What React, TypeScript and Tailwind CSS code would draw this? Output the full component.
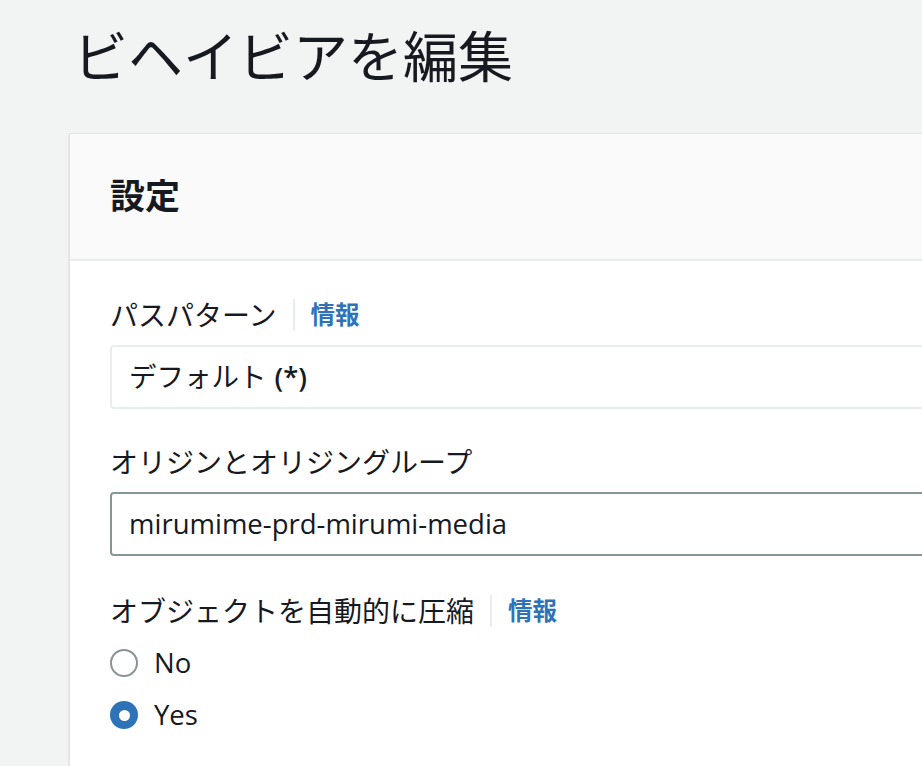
import React from 'react'

const font = { fontFamily: '"Open Sans", "Noto Sans CJK JP", sans-serif' }

function InfoLabel({ text, info }: { text: string; info?: boolean }) {
  return (
    <div className="flex h-[40px] items-center text-[28px] text-[#16191f]">
      <span>{text}</span>
      {info && (
        <>
          <span className="mx-[16px] h-[32px] w-[2px] bg-[#eaeded]" />
          <span className="text-[24.5px] font-bold text-[#2e73b8]">情報</span>
        </>
      )}
    </div>
  )
}

function Radio({ label, checked }: { label: string; checked?: boolean }) {
  return (
    <div className="flex h-[44px] items-center gap-[16px]">
      {checked ? (
        <span className="flex h-[28px] w-[28px] items-center justify-center rounded-full bg-[#2e73b8]">
          <span className="h-[11px] w-[11px] rounded-full bg-white" />
        </span>
      ) : (
        <span className="h-[28px] w-[28px] rounded-full border-[2.5px] border-[#879596] bg-white" />
      )}
      <span className="text-[27.5px] font-medium text-[#16191f]">{label}</span>
    </div>
  )
}

export default function App() {
  return (
    <div className="h-[766px] overflow-hidden bg-[#f2f3f3] pl-[69px]" style={font}>
      <h1 className="pl-[4px] pt-[16px] text-[55px] leading-[80px] font-normal text-[#16191f]">
        ビヘイビアを編集
      </h1>

      <div className="mt-[37px] w-[900px] border border-[#e1e4e4] bg-white shadow-[0_1px_1px_rgba(0,28,36,0.3)]">
        <div className="flex h-[127px] items-center border-b-2 border-[#eaeded] bg-[#fafafa] px-[40px]">
          <h2 className="text-[35px] font-bold text-[#16191f]">設定</h2>
        </div>

        <div className="px-[40px] pt-[34px] pb-[40px]">
          <InfoLabel text="パスパターン" info />
          <div className="mt-[10px] flex h-[64px] items-center rounded-[4px] border-2 border-[#eaeded] bg-white px-[17px] text-[27.5px] text-[#16191f]">
            デフォルト<span className="ml-[8px] font-semibold">(*)</span>
          </div>

          <div className="mt-[33px]">
            <InfoLabel text="オリジンとオリジングループ" />
          </div>
          <div className="mt-[10px] flex h-[64px] items-center rounded-[4px] border-2 border-[#879596] bg-white px-[17px] text-[27.5px] font-medium text-[#16191f]">
            mirumime-prd-mirumi-media
          </div>

          <div className="mt-[35px]">
            <InfoLabel text="オブジェクトを自動的に圧縮" info />
          </div>
          <div className="mt-[10px] flex flex-col gap-[8px]">
            <Radio label="No" />
            <Radio label="Yes" checked />
          </div>
        </div>
      </div>
    </div>
  )
}
